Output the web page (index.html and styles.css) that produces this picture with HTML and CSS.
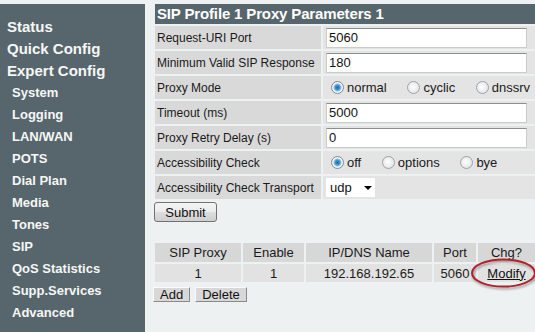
FILE: index.html
```html
<!DOCTYPE html>
<html lang="en">
<head>
    <meta charset="UTF-8">
    <meta name="viewport" content="width=device-width, initial-scale=1.0">
    <title>SIP Profile 1 Proxy Parameters 1</title>
    <link rel="stylesheet" href="styles.css">
</head>
<body>
    <div class="page">
        <nav class="sidebar">
            <a class="nav-top" href="#">Status</a>
            <a class="nav-top" href="#">Quick Config</a>
            <a class="nav-top" href="#">Expert Config</a>
            <a class="nav-sub" href="#">System</a>
            <a class="nav-sub" href="#">Logging</a>
            <a class="nav-sub" href="#">LAN/WAN</a>
            <a class="nav-sub" href="#">POTS</a>
            <a class="nav-sub" href="#">Dial Plan</a>
            <a class="nav-sub" href="#">Media</a>
            <a class="nav-sub" href="#">Tones</a>
            <a class="nav-sub" href="#">SIP</a>
            <a class="nav-sub" href="#">QoS Statistics</a>
            <a class="nav-sub" href="#">Supp.Services</a>
            <a class="nav-sub" href="#">Advanced</a>
        </nav>

        <main class="content">
            <form id="proxyForm">
                <table class="params">
                    <tr><th class="title" colspan="2">SIP Profile 1 Proxy Parameters 1</th></tr>
                    <tr>
                        <td class="label">Request-URI Port</td>
                        <td class="value"><input type="text" name="uriPort" value="5060"></td>
                    </tr>
                    <tr>
                        <td class="label">Minimum Valid SIP Response</td>
                        <td class="value"><input type="text" name="minResponse" value="180"></td>
                    </tr>
                    <tr>
                        <td class="label">Proxy Mode</td>
                        <td class="value">
                            <label class="opt"><input type="radio" name="mode" checked>normal</label>
                            <label class="opt"><input type="radio" name="mode">cyclic</label>
                            <label class="opt"><input type="radio" name="mode">dnssrv</label>
                        </td>
                    </tr>
                    <tr>
                        <td class="label">Timeout (ms)</td>
                        <td class="value"><input type="text" name="timeout" value="5000"></td>
                    </tr>
                    <tr>
                        <td class="label">Proxy Retry Delay (s)</td>
                        <td class="value"><input type="text" name="retryDelay" value="0"></td>
                    </tr>
                    <tr>
                        <td class="label">Accessibility Check</td>
                        <td class="value">
                            <label class="opt"><input type="radio" name="check" checked>off</label>
                            <label class="opt"><input type="radio" name="check">options</label>
                            <label class="opt"><input type="radio" name="check">bye</label>
                        </td>
                    </tr>
                    <tr>
                        <td class="label">Accessibility Check Transport</td>
                        <td class="value">
                            <span class="select-wrap">
                                <select name="transport">
                                    <option>udp</option>
                                    <option>tcp</option>
                                </select>
                            </span>
                        </td>
                    </tr>
                </table>
                <button type="button" class="submit">Submit</button>
            </form>

            <table class="proxies">
                <tr>
                    <th class="col-proxy">SIP Proxy</th>
                    <th class="col-enable">Enable</th>
                    <th class="col-ip">IP/DNS Name</th>
                    <th class="col-port">Port</th>
                    <th>Chg?</th>
                </tr>
                <tr>
                    <td>1</td>
                    <td>1</td>
                    <td>192.168.192.65</td>
                    <td>5060</td>
                    <td><a href="#">Modify</a></td>
                </tr>
            </table>
            <div class="actions">
                <button type="button" class="flat">Add</button>
                <button type="button" class="flat">Delete</button>
            </div>

            <!-- red marker drawn round the Modify link -->
            <svg class="marker" width="68" height="36" viewBox="0 0 68 36">
                <ellipse cx="33.5" cy="17" rx="31.5" ry="13.5" fill="none" stroke="#b3202a" stroke-width="2"/>
            </svg>
        </main>
    </div>
</body>
</html>
```

FILE: styles.css
```css
body {
    margin: 0;
    background-color: #eef1f1;
    font-family: "Liberation Sans", Arial, sans-serif;
    color: #1a1a1a;
    overflow: hidden;
}
.page {
    display: flex;
    padding-top: 4px;
}
.sidebar {
    width: 145px;
    min-height: calc(100vh - 4px);
    padding-top: 12px;
    box-sizing: border-box;
    background-color: #56666c;
    flex-shrink: 0;
}
.sidebar a {
    display: block;
    color: #f6f6f6;
    font-weight: bold;
    text-decoration: none;
    line-height: 22px;
}
.nav-top {
    font-size: 15px;
    padding-left: 7px;
}
.nav-sub {
    font-size: 13px;
    padding-left: 12px;
}
.content {
    position: relative;
    margin-left: 10px;
    width: 380px;
}
form {
    margin: 0;
}

/* parameter table */
.params {
    border-collapse: separate;
    border-spacing: 2px;
    margin: -2px;
    width: 384px;
}
.params .title {
    background-color: #56666c;
    color: #fff;
    font-size: 15px;
    font-weight: bold;
    letter-spacing: -0.15px;
    text-align: left;
    height: 20px;
    line-height: 20px;
    padding: 0 2px;
}
.params td {
    height: 23px;
    padding: 0;
    vertical-align: middle;
    white-space: nowrap;
}
.params .label {
    width: 162px;
    background-color: #d9d9d9;
    font-size: 12px;
    padding: 0 2px;
}
.params .value {
    background-color: #e4e4e4;
    font-size: 13px;
    padding-left: 3px;
}
input[type="text"] {
    width: 201px;
    height: 20px;
    box-sizing: border-box;
    border: 1px solid #cbcbcb;
    border-top-color: #8e8e8e;
    padding: 0 2px;
    font-family: inherit;
    font-size: 13px;
    color: #111;
    vertical-align: middle;
}
.opt {
    margin-right: 12px;
}
.opt:last-child {
    margin-right: 0;
}
input[type="radio"] {
    appearance: none;
    width: 13px;
    height: 13px;
    margin: 0 3px 0 5px;
    border: 1px solid #9aa3ab;
    border-radius: 50%;
    background: radial-gradient(circle at 45% 45%, #ffffff, #d9dcde);
    vertical-align: -2px;
}
input[type="radio"]:checked {
    border-color: #7f8d99;
    background: radial-gradient(circle, #1c6aa8 0, #3a8fcb 2px, #8cc0e4 3.5px, #f8f8f8 4.5px, #d9dcde 100%);
}
.select-wrap {
    position: relative;
    display: inline-block;
    width: 49px;
    height: 19px;
    background-color: #fff;
    vertical-align: middle;
}
.select-wrap select {
    appearance: none;
    width: 100%;
    height: 100%;
    border: 0;
    background: transparent;
    padding: 0 0 0 4px;
    font-family: inherit;
    font-size: 13px;
    color: #111;
}
.select-wrap::after {
    content: "";
    position: absolute;
    right: 3px;
    top: 8px;
    border-left: 4px solid transparent;
    border-right: 4px solid transparent;
    border-top: 4px solid #000;
    pointer-events: none;
}
.submit {
    display: block;
    margin: 3px 0 0 -1px;
    width: 63px;
    height: 20px;
    padding: 0;
    border: 1px solid #727272;
    border-radius: 3px;
    background: linear-gradient(#f4f4f4, #ebebeb 50%, #dddddd 50%, #cfcfcf);
    font-family: inherit;
    font-size: 13px;
    color: #111;
}

/* proxy list */
.proxies {
    border-collapse: separate;
    border-spacing: 2px;
    margin: 19px -2px -2px -2px;
    width: 384px;
    font-size: 13px;
}
.proxies th, .proxies td {
    text-align: center;
    padding: 0;
    font-weight: normal;
}
.proxies th {
    height: 19px;
    background-color: #d7d7d7;
}
.proxies td {
    height: 18px;
    background-color: #e2e2e2;
}
.proxies a {
    color: #111;
}
.col-proxy {
    width: 86px;
}
.col-enable {
    width: 61px;
}
.col-ip {
    width: 126px;
}
.col-port {
    width: 42px;
}
.actions {
    display: flex;
    gap: 5px;
    margin: 5px 0 0 -2px;
}
.flat {
    height: 15px;
    padding: 0 6px;
    border: 1px solid;
    border-color: #fafafa #8a8a8a #8a8a8a #fafafa;
    background-color: #d8d8d8;
    font-family: inherit;
    font-size: 13px;
    line-height: 13px;
    color: #111;
}
.marker {
    position: absolute;
    left: 315px;
    top: 252px;
    filter: drop-shadow(1px 2px 1px rgba(0, 0, 0, 0.35));
}
```
